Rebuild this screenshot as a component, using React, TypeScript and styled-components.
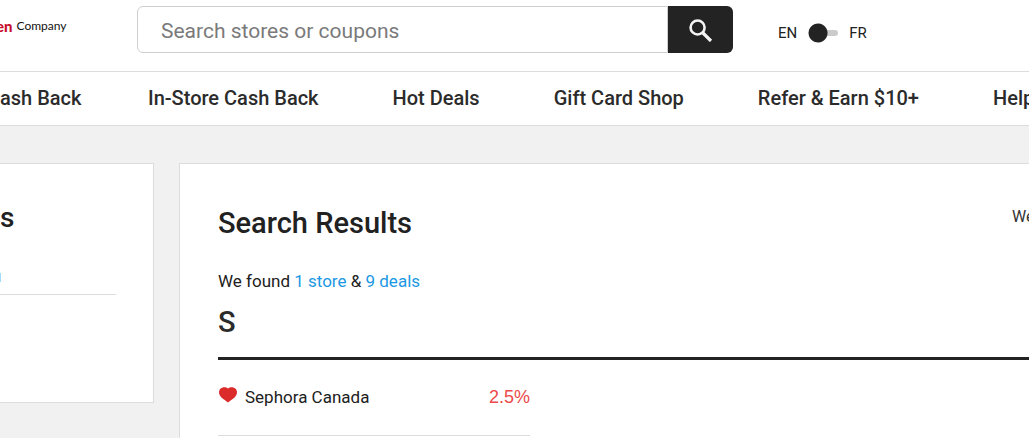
import React from "react";
import styled, { createGlobalStyle } from "styled-components";

const GlobalStyle = createGlobalStyle`
  *, *::before, *::after { box-sizing: border-box; }
  html { background: #f1f1f1; }
  body {
    margin: 0;
    overflow-x: hidden;
    color: #212121;
    font-family: Roboto, "Liberation Sans", sans-serif;
    font-size: 17px;
    line-height: 24px;
  }
  h1, h2, p, ul { margin: 0; padding: 0; }
  a { color: inherit; text-decoration: none; }
`;

const Header = styled.header`
  display: flex;
  align-items: flex-start;
  padding: 6px 0 18px;
  background: #fff;
  border-bottom: 1px solid #dcdcdc;
`;

const Logo = styled.a`
  flex: 0 0 137px;
  display: flex;
  gap: 4px;
  padding-top: 12px;
  overflow: hidden;
  color: #111;
  font-family: Lato, sans-serif;
  font-size: 12px;
  line-height: 16px;
`;

const LogoMark = styled.strong`
  margin-left: -4px;
  color: #c8102e;
  font-size: 15px;
  font-weight: 900;
`;

const SearchForm = styled.form`
  flex: 0 1 596px;
  display: flex;
  height: 47px;
`;

const SearchInput = styled.input`
  flex: 1;
  min-width: 0;
  padding: 2px 23px 0;
  border: 1px solid #cfcfcf;
  border-radius: 6px 0 0 6px;
  background: #fff;
  color: #212121;
  font: 400 21px Roboto, sans-serif;
  &::placeholder { color: #7a7a7a; opacity: 1; }
`;

const SearchButton = styled.button`
  flex: 0 0 65px;
  display: grid;
  place-items: center;
  padding: 0;
  border: 0;
  border-radius: 0 6px 6px 0;
  background: #232323;
`;

const LanguageSwitch = styled.label`
  display: flex;
  align-items: center;
  gap: 11px;
  margin: 15px 0 0 45px;
  font-size: 15px;
`;

const Toggle = styled.input`
  appearance: none;
  width: 30px;
  height: 20px;
  margin: 0;
  border-radius: 10px;
  background:
    radial-gradient(circle at 10px 10px, #232323 9px, transparent 10px),
    linear-gradient(#cbcbcd, #cbcbcd) 10px 7px / 17px 6px no-repeat;
  &::after {
    content: "";
    display: block;
    width: 6px;
    height: 6px;
    margin: 7px 0 0 24px;
    border-radius: 3px;
    background: #cbcbcd;
  }
`;

const Nav = styled.nav`
  display: flex;
  gap: 74px;
  height: 54px;
  overflow: hidden;
  background: #fff;
  border-bottom: 1px solid #dcdcdc;
  white-space: nowrap;
`;

const NavLink = styled.a`
  flex: none;
  color: #2b2b2b;
  font-size: 20px;
  font-weight: 500;
  line-height: 52px;
  &:first-child { width: 74px; }
`;

const Content = styled.div`
  display: flex;
  align-items: flex-start;
  gap: 25px;
  padding-top: 37px;
`;

const Sidebar = styled.aside`
  flex: 0 0 154px;
  min-height: 240px;
  padding: 36px 37px 0 0;
  background: #fff;
  border: 1px solid #dcdcdc;
  border-left: 0;
`;

const SidebarTitle = styled.h2`
  font-size: 28px;
  font-weight: 500;
  line-height: 36px;
`;

const SidebarItem = styled.div`
  display: flex;
  align-items: center;
  height: 59px;
  padding-top: 24px;
  border-bottom: 1px solid #dcdcdc;
`;

const SidebarMark = styled.span`
  width: 1px;
  height: 9px;
  background: #9fdcf8;
`;

const Results = styled.main`
  flex: 1;
  min-width: 0;
  min-height: 290px;
  padding: 41px 0 0 38px;
  overflow: hidden;
  background: #fff;
  border: 1px solid #dcdcdc;
  border-width: 1px 0 0 1px;
`;

const ResultsHead = styled.div`
  display: flex;
  justify-content: space-between;
  align-items: flex-start;
`;

const Title = styled.h1`
  font-size: 29px;
  font-weight: 500;
  line-height: 36px;
`;

const Note = styled.p`
  width: 17px;
  color: #333;
  font-size: 16px;
  white-space: nowrap;
`;

const Summary = styled.p`
  margin-top: 28px;
`;

const ResultLink = styled.a`
  color: #1b98e4;
`;

const Letter = styled.h2`
  height: 67px;
  padding-top: 11px;
  border-bottom: 3px solid #232323;
  color: #2b2b2b;
  font-size: 29px;
  font-weight: 500;
  line-height: 36px;
`;

const Stores = styled.ul`
  width: 312px;
  list-style: none;
`;

const Store = styled.li`
  display: flex;
  align-items: center;
  gap: 7px;
  height: 76px;
  padding-bottom: 2px;
  border-bottom: 1px solid #dcdcdc;
`;

const StoreName = styled.a`
  flex: 1;
`;

const Rate = styled.span`
  color: #ec4a4a;
  font-family: "Liberation Sans", sans-serif;
  font-size: 18px;
`;

const SearchIcon = () => (
  <svg width="24" height="24" viewBox="0 0 24 24" fill="none" stroke="#f4f4f4" aria-hidden="true">
    <circle cx="8.6" cy="9.5" r="7" strokeWidth="2.6" />
    <path d="M13.500 14.500L22 23" strokeWidth="3.2" />
  </svg>
);

const HeartIcon = () => (
  <svg width="20" height="20" viewBox="0 0 20 20" fill="#dc2b2b" aria-hidden="true">
    <path d="M10 1.400C11.200 .2 13 0 14.600 .2C17.400 .7 19.200 2.800 19 5.600C18.700 10 14.400 12.400 10 15.400C5.600 12.400 1.300 10 1 5.600C.8 2.800 2.600 .7 5.400 .2C7 0 8.800 .2 10 1.400Z" />
  </svg>
);

const links = ["ash Back", "In-Store Cash Back", "Hot Deals", "Gift Card Shop", "Refer & Earn $10+", "Help"];

export default function App() {
  return (
    <>
      <GlobalStyle />
      <Header>
        <Logo href="#">
          <LogoMark>en</LogoMark>
          <span>Company</span>
        </Logo>
        <SearchForm role="search" onSubmit={(e) => e.preventDefault()}>
          <SearchInput type="search" aria-label="Search" placeholder="Search stores or coupons" />
          <SearchButton type="submit" aria-label="Search">
            <SearchIcon />
          </SearchButton>
        </SearchForm>
        <LanguageSwitch>
          <span>EN</span>
          <Toggle type="checkbox" role="switch" />
          <span>FR</span>
        </LanguageSwitch>
      </Header>
      <Nav>
        {links.map((label) => (
          <NavLink href="#" key={label}>{label}</NavLink>
        ))}
      </Nav>
      <Content>
        <Sidebar>
          <SidebarTitle>s</SidebarTitle>
          <SidebarItem>
            <SidebarMark />
          </SidebarItem>
        </Sidebar>
        <Results>
          <ResultsHead>
            <Title>Search Results</Title>
            <Note>We</Note>
          </ResultsHead>
          <Summary>
            We found <ResultLink href="#">1 store</ResultLink> &amp; <ResultLink href="#">9 deals</ResultLink>
          </Summary>
          <Letter>S</Letter>
          <Stores>
            <Store>
              <HeartIcon />
              <StoreName href="#">Sephora Canada</StoreName>
              <Rate>2.5%</Rate>
            </Store>
          </Stores>
        </Results>
      </Content>
    </>
  );
}
